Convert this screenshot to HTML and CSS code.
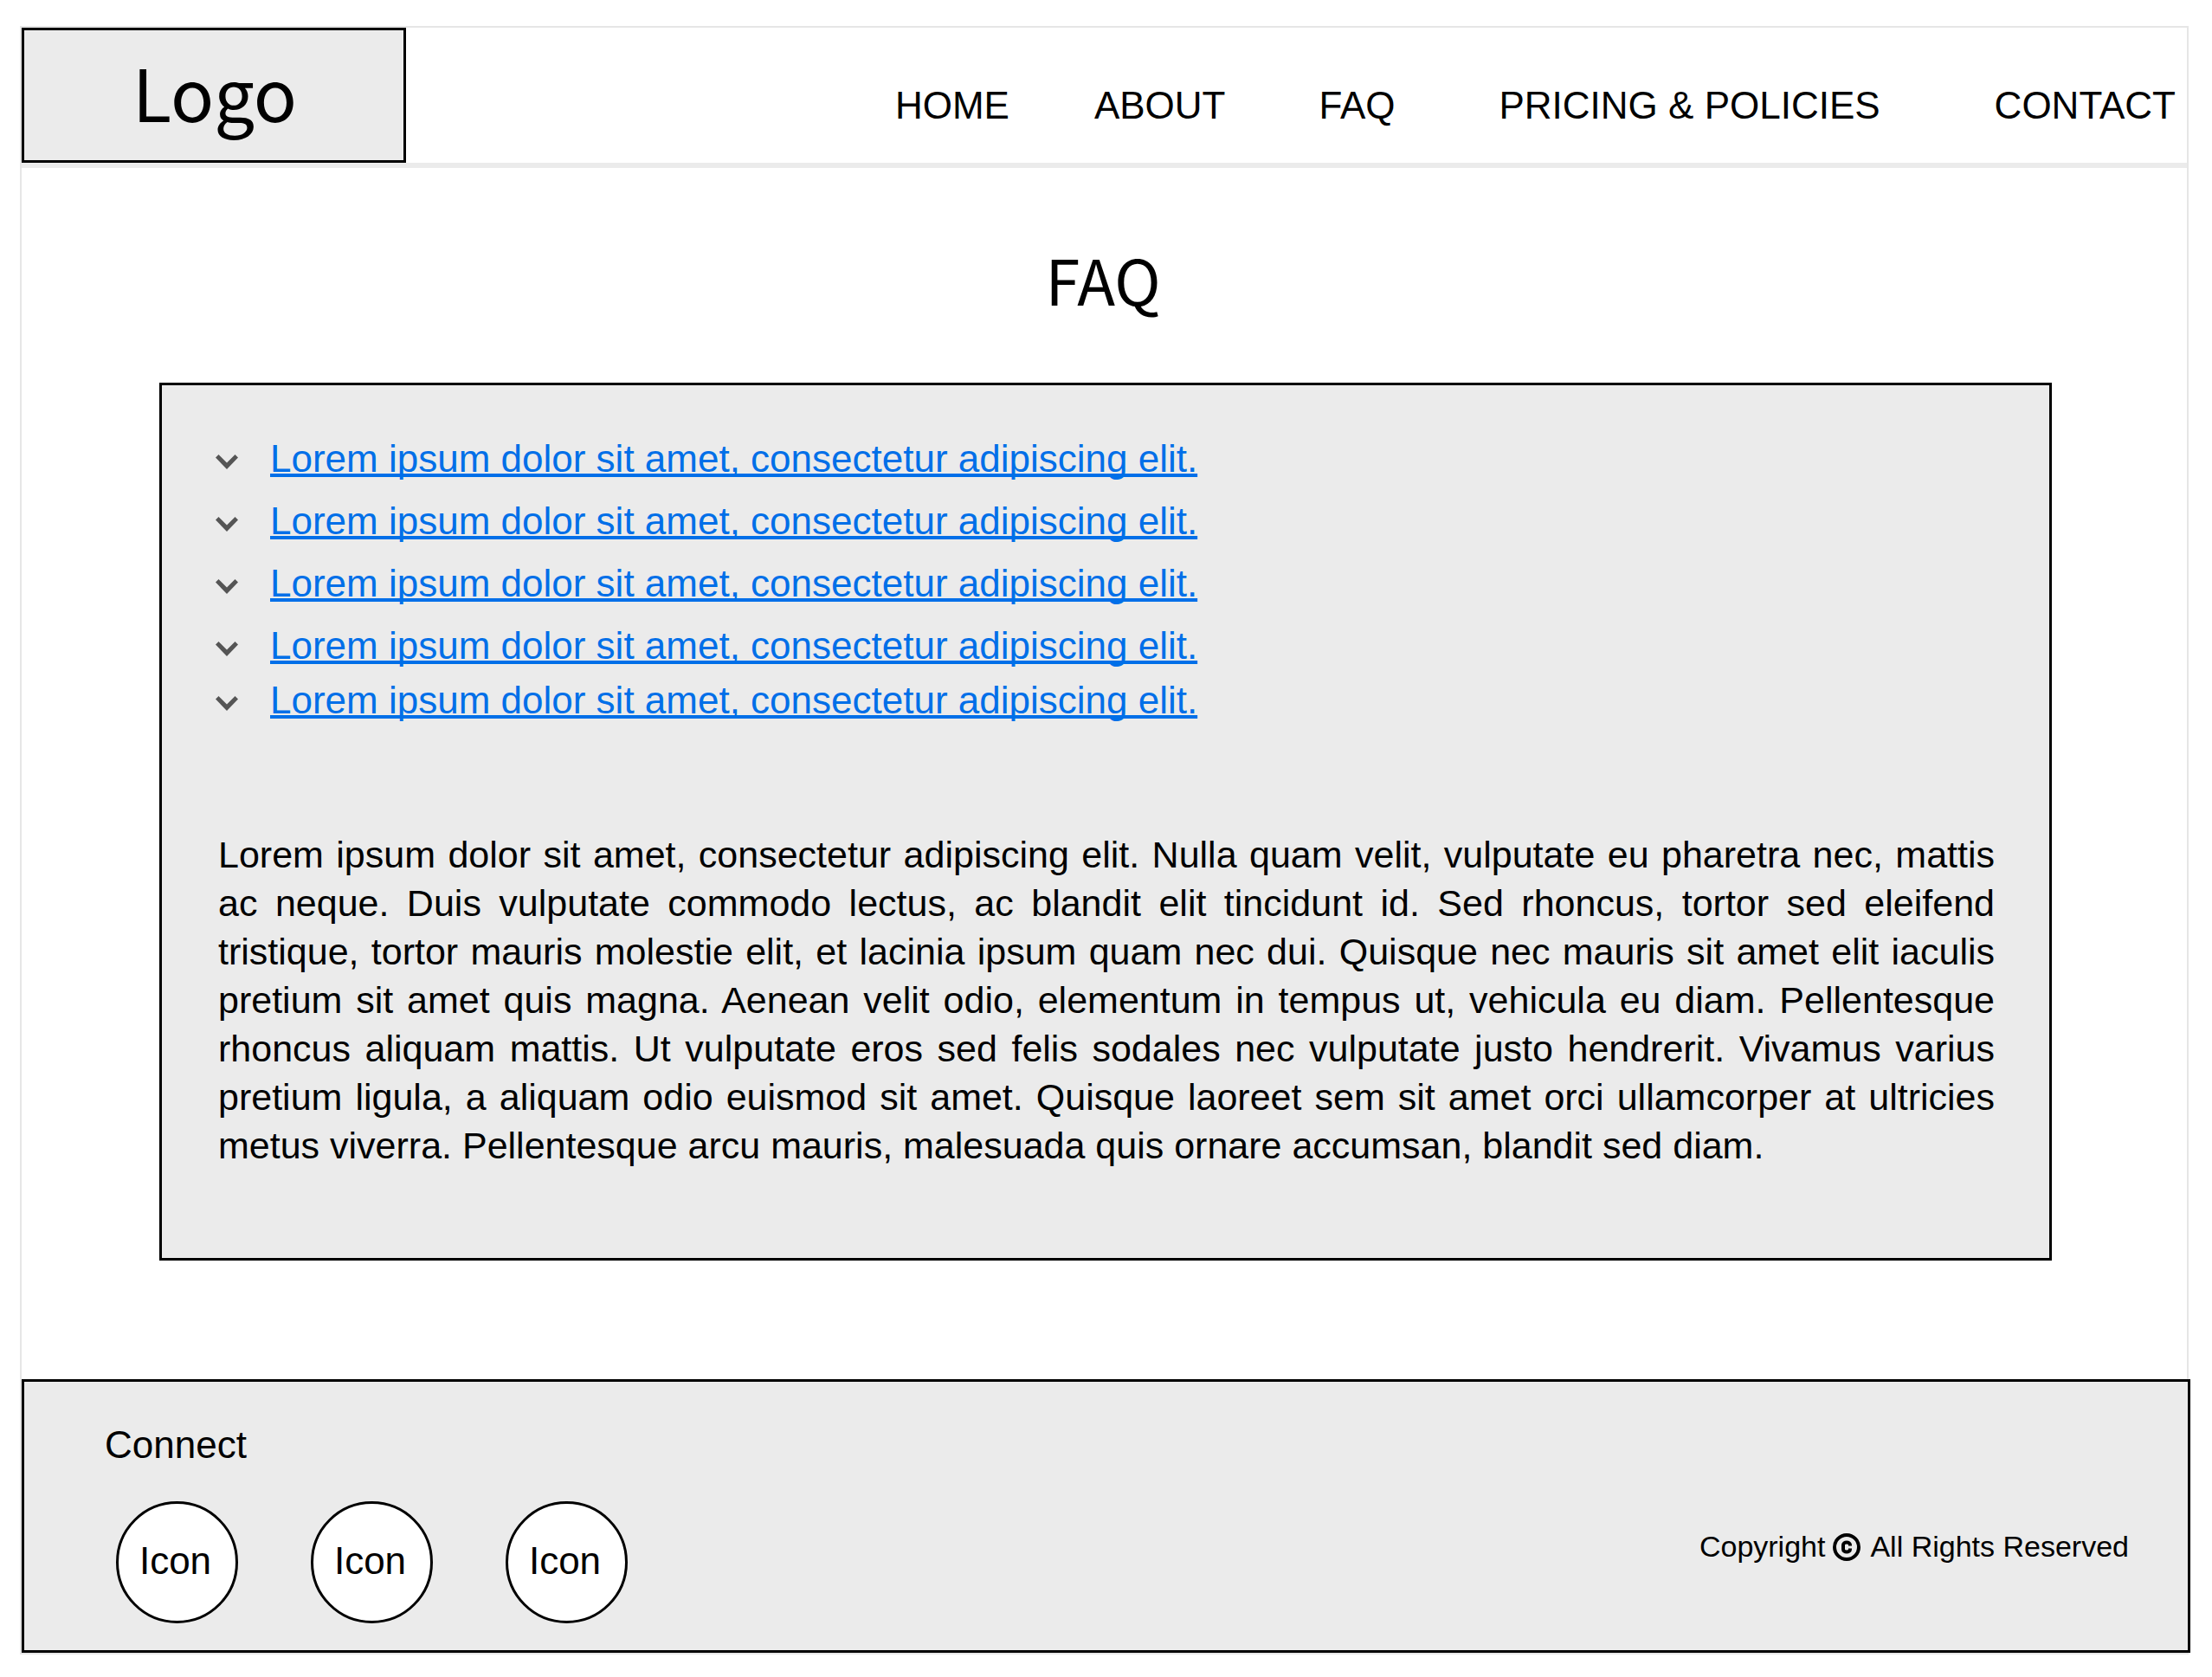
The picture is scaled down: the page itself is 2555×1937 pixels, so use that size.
FILE: index.html
```html
<!DOCTYPE html>
<html lang="en">
<head>
<meta charset="utf-8">
<title>FAQ</title>
<link rel="stylesheet" href="styles.css">
</head>
<body>
<div class="page">
  <header class="header">
    <a class="logo" href="#">Logo</a>
    <nav class="nav">
      <a class="nav-link" href="#">HOME</a>
      <a class="nav-link nav-about" href="#">ABOUT</a>
      <a class="nav-link nav-faq" href="#">FAQ</a>
      <a class="nav-link nav-pricing" href="#">PRICING &amp; POLICIES</a>
      <a class="nav-link nav-contact" href="#">CONTACT</a>
    </nav>
  </header>
  <main class="main">
    <h1 class="title">FAQ</h1>
    <section class="panel">
      <ul class="questions">
        <li class="question"><svg class="chevron" viewBox="0 0 26 17" aria-hidden="true"><path d="M3.5 0 13 9.500 22.500 0 26 3.500 13 17 0 3.500z"/></svg><a class="question-link" href="#">Lorem ipsum dolor sit amet, consectetur adipiscing elit.</a></li>
        <li class="question"><svg class="chevron" viewBox="0 0 26 17" aria-hidden="true"><path d="M3.5 0 13 9.500 22.500 0 26 3.500 13 17 0 3.500z"/></svg><a class="question-link" href="#">Lorem ipsum dolor sit amet, consectetur adipiscing elit.</a></li>
        <li class="question"><svg class="chevron" viewBox="0 0 26 17" aria-hidden="true"><path d="M3.5 0 13 9.500 22.500 0 26 3.500 13 17 0 3.500z"/></svg><a class="question-link" href="#">Lorem ipsum dolor sit amet, consectetur adipiscing elit.</a></li>
        <li class="question"><svg class="chevron" viewBox="0 0 26 17" aria-hidden="true"><path d="M3.5 0 13 9.500 22.500 0 26 3.500 13 17 0 3.500z"/></svg><a class="question-link" href="#">Lorem ipsum dolor sit amet, consectetur adipiscing elit.</a></li>
        <li class="question"><svg class="chevron" viewBox="0 0 26 17" aria-hidden="true"><path d="M3.5 0 13 9.500 22.500 0 26 3.500 13 17 0 3.500z"/></svg><a class="question-link" href="#">Lorem ipsum dolor sit amet, consectetur adipiscing elit.</a></li>
      </ul>
      <p class="answer">Lorem ipsum dolor sit amet, consectetur adipiscing elit. Nulla quam velit, vulputate eu pharetra nec, mattis ac neque. Duis vulputate commodo lectus, ac blandit elit tincidunt id. Sed rhoncus, tortor sed eleifend tristique, tortor mauris molestie elit, et lacinia ipsum quam nec dui. Quisque nec mauris sit amet elit iaculis pretium sit amet quis magna. Aenean velit odio, elementum in tempus ut, vehicula eu diam. Pellentesque rhoncus aliquam mattis. Ut vulputate eros sed felis sodales nec vulputate justo hendrerit. Vivamus varius pretium ligula, a aliquam odio euismod sit amet. Quisque laoreet sem sit amet orci ullamcorper at ultricies metus viverra. Pellentesque arcu mauris, malesuada quis ornare accumsan, blandit sed diam.</p>
    </section>
  </main>
  <footer class="footer">
    <div class="connect">
      <h2 class="connect-title">Connect</h2>
      <div class="socials">
        <a class="social" href="#">Icon</a>
        <a class="social" href="#">Icon</a>
        <a class="social" href="#">Icon</a>
      </div>
    </div>
    <p class="copyright">
      <span>Copyright</span>
      <svg class="copyright-mark" viewBox="0 0 32 32" role="img" aria-label="copyright"><circle cx="16" cy="16" r="14" fill="none" stroke="#000" stroke-width="4"/><path d="M20 14.500V13.500a4 3 0 0 0-8 0v5a4 3 0 0 0 8 0v-1" fill="none" stroke="#000" stroke-width="4"/></svg>
      <span>All Rights Reserved</span>
    </p>
  </footer>
</div>
</body>
</html>
```
FILE: styles.css
```css
* {
  box-sizing: border-box;
}

body {
  margin: 0;
  padding: 30px 27px 27px 23px;
  background: #fff;
  color: #000;
  font-family: "Liberation Sans", Arial, sans-serif;
  font-size: 44px;
  line-height: 52px;
}

a {
  color: inherit;
  text-decoration: none;
}

h1,
h2,
p,
ul {
  margin: 0;
  padding: 0;
  font-weight: 400;
}

.page {
  border: 2px solid #e6e6e6;
}

/* Header */

.header {
  display: flex;
  justify-content: space-between;
  border-bottom: 6px solid #ebebeb;
}

.logo {
  display: flex;
  align-items: center;
  justify-content: center;
  width: 444px;
  height: 156px;
  padding: 0 0 10px 2px;
  border: 3px solid #000;
  background: #ebebeb;
  font-family: "Noto Sans CJK SC", sans-serif;
  font-size: 83px;
}

.nav {
  display: flex;
  align-items: center;
  padding: 24px 13px 0 0;
  white-space: nowrap;
}

.nav-about {
  margin-left: 98px;
}

.nav-faq {
  margin-left: 108px;
}

.nav-pricing {
  margin-left: 120px;
}

.nav-contact {
  margin-left: 132px;
}

/* Questions */

.main {
  padding: 76px 156px 137px 159px;
}

.title {
  margin-bottom: 68px;
  padding-right: 6px;
  font-family: "Noto Sans CJK SC", sans-serif;
  font-size: 72px;
  line-height: 104px;
  text-align: center;
}

.panel {
  padding: 59px 63px 102px 65px;
  border: 3px solid #000;
  background: #ebebeb;
}

.questions {
  margin-left: -3px;
  list-style: none;
}

.question {
  display: flex;
  align-items: center;
  gap: 37px;
  margin-bottom: 20px;
}

.question:nth-child(4) {
  margin-bottom: 11px;
}

.question:last-child {
  margin-bottom: 0;
}

.chevron {
  flex: none;
  width: 26px;
  height: 17px;
  margin-top: 7px;
  fill: #555;
}

.question-link {
  color: #006fe8;
  text-decoration: underline;
  text-decoration-skip-ink: none;
  text-decoration-thickness: 4px;
  text-underline-offset: 2px;
}

.answer {
  margin-top: 124px;
  font-size: 43px;
  line-height: 56px;
  text-align: justify;
}

/* Footer */

.footer {
  display: flex;
  align-items: flex-end;
  justify-content: space-between;
  margin-right: -4px;
  padding: 47px 68px 31px 93px;
  border: 3px solid #000;
  background: #ebebeb;
}

.connect-title {
  font-size: 44px;
}

.socials {
  display: flex;
  gap: 84px;
  margin-top: 39px;
  padding-left: 13px;
}

.social {
  display: flex;
  align-items: center;
  justify-content: center;
  width: 141px;
  height: 141px;
  padding: 0 4px 4px 0;
  border: 3px solid #000;
  border-radius: 50%;
  background: #fff;
}

.copyright {
  display: flex;
  align-items: center;
  margin-bottom: 69px;
  font-size: 34px;
  line-height: 40px;
  white-space: nowrap;
}

.copyright-mark {
  width: 32px;
  height: 32px;
  margin: 2px 11px 0 9px;
}
```
